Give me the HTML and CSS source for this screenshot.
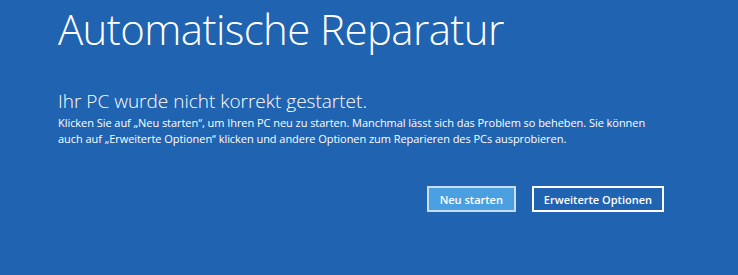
FILE: index.html
```html
<!DOCTYPE html>
<html lang="de">
<head>
  <meta charset="UTF-8" />
  <meta name="viewport" content="width=device-width, initial-scale=1.0" />
  <title>Automatische Reparatur</title>
  <link rel="stylesheet" href="styles.css">
</head>
<body>
  <div class="repair-screen">
    <h1 class="repair-title">Automatische Reparatur</h1>
    <h2 class="repair-subtitle">Ihr PC wurde nicht korrekt gestartet.</h2>
    <p class="repair-text">Klicken Sie auf „Neu starten“, um Ihren PC neu zu starten. Manchmal lässt sich das Problem so beheben. Sie können auch auf „Erweiterte Optionen“ klicken und andere Optionen zum Reparieren des PCs ausprobieren.</p>
    <div class="repair-actions">
      <button class="repair-btn primary">Neu starten</button>
      <button class="repair-btn">Erweiterte Optionen</button>
    </div>
  </div>
</body>
</html>
```

FILE: styles.css
```css
* { box-sizing: border-box; margin: 0; padding: 0; }
body
{
  background: #1f63b1;
  color: #fff;
  font-family: "Open Sans", "Noto Sans", sans-serif;
  width: 738px;
  height: 275px;
  overflow: hidden;
}
.repair-screen
{
  padding: 3px 0 0 58px;
  width: 680px;
}
.repair-title
{
  font-weight: 300;
  font-size: 42px;
  line-height: 52px;
  letter-spacing: -0.6px;
}
.repair-subtitle
{
  font-weight: 300;
  font-size: 19px;
  line-height: 26px;
  margin-top: 33px;
}
.repair-text
{
  font-size: 11px;
  line-height: 16px;
  width: 600px;
  margin-top: 1px;
  letter-spacing: -0.05px;
}
.repair-actions
{
  display: flex;
  justify-content: flex-end;
  gap: 16px;
  margin-top: 39px;
  padding-right: 16px;
}
.repair-btn
{
  font-family: inherit;
  font-size: 11px;
  font-weight: 600;
  color: #fff;
  background: #1f63b1;
  border: 2px solid #fff;
  height: 26px;
  padding: 0 10px;
}
.repair-btn.primary
{
  background: #4a9fe0;
  border-color: #c8def2;
  width: 89px;
}
```
